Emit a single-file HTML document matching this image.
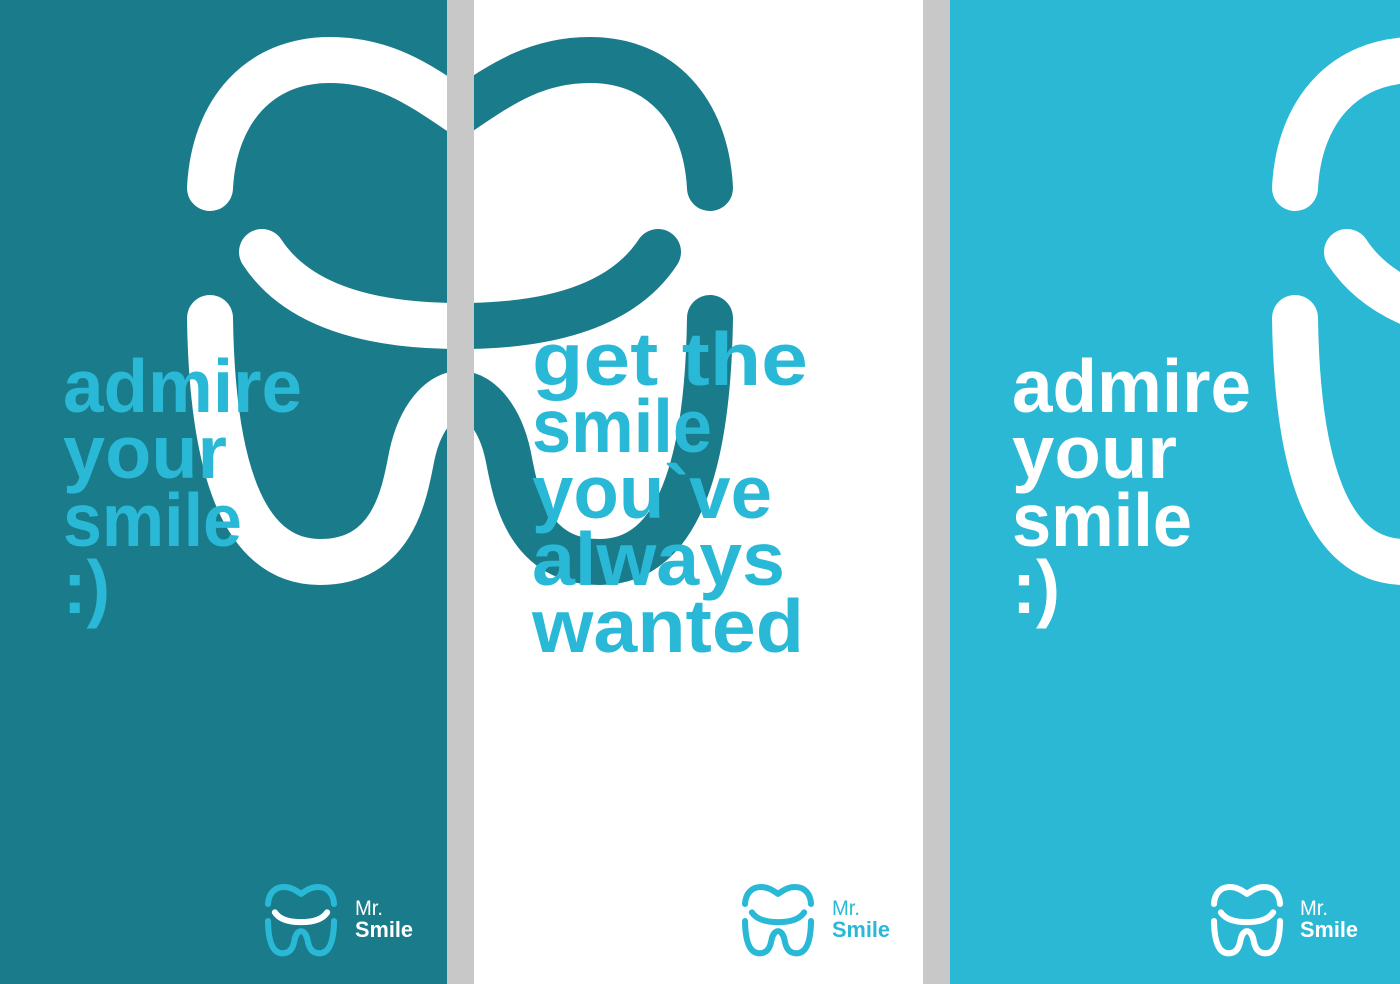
<!DOCTYPE html>
<html><head><meta charset="utf-8"><style>
html,body{margin:0;padding:0;width:1400px;height:984px;overflow:hidden;background:#fff}
svg{display:block}
text{font-family:"Liberation Sans",sans-serif;font-weight:bold}
</style></head><body>
<svg width="1400" height="984" viewBox="0 0 1400 984" xmlns="http://www.w3.org/2000/svg">
<defs>
<g id="tooth" fill="none" stroke-width="46" stroke-linecap="round" stroke-linejoin="round">
<path d="M210,188 C214,110 260,60 330,60 C385,60 420,85 460,112 C500,85 535,60 590,60 C660,60 706,110 710,188"/>
<path d="M262,252 C300,310 380,326 460,326 C540,326 620,310 658,252"/>
<path d="M210,318 C212,460 240,562 320,562 C395,562 405,490 412,455 C420,418 440,394 460,394 C480,394 500,418 508,455 C515,490 525,562 600,562 C680,562 708,460 710,318"/>
</g>
<clipPath id="c1"><rect x="0" y="0" width="447" height="984"/></clipPath>
<clipPath id="c2"><rect x="474" y="0" width="449" height="984"/></clipPath>
<clipPath id="c3"><rect x="950" y="0" width="450" height="984"/></clipPath>
</defs>
<rect x="0" y="0" width="447" height="984" fill="#1a7b8a"/>
<rect x="474" y="0" width="449" height="984" fill="#ffffff"/>
<rect x="950" y="0" width="450" height="984" fill="#2ab8d5"/>
<rect x="447" y="0" width="27" height="984" fill="#c8c8c8"/>
<rect x="923" y="0" width="27" height="984" fill="#c8c8c8"/>
<use href="#tooth" stroke="#ffffff" clip-path="url(#c1)"/>
<use href="#tooth" stroke="#1a7b8a" clip-path="url(#c2)"/>
<g clip-path="url(#c3)"><use href="#tooth" stroke="#ffffff" transform="translate(1085,0)"/></g>

<g font-size="75" fill="#29b9d6">
<text x="63" y="412" textLength="239" lengthAdjust="spacingAndGlyphs">admire</text>
<text x="63" y="478" textLength="164" lengthAdjust="spacingAndGlyphs">your</text>
<text x="63" y="546" textLength="179" lengthAdjust="spacingAndGlyphs">smile</text>
<text x="63" y="613" textLength="47" lengthAdjust="spacingAndGlyphs">:)</text>
<text x="532" y="385" textLength="276" lengthAdjust="spacingAndGlyphs">get the</text>
<text x="532" y="452" textLength="180" lengthAdjust="spacingAndGlyphs">smile</text>
<text x="532" y="518" textLength="240" lengthAdjust="spacingAndGlyphs">you`ve</text>
<text x="532" y="585" textLength="253" lengthAdjust="spacingAndGlyphs">always</text>
<text x="532" y="652" textLength="272" lengthAdjust="spacingAndGlyphs">wanted</text>
</g>
<g font-size="75" fill="#ffffff">
<text x="1012" y="412" textLength="239" lengthAdjust="spacingAndGlyphs">admire</text>
<text x="1012" y="478" textLength="165" lengthAdjust="spacingAndGlyphs">your</text>
<text x="1012" y="546" textLength="180" lengthAdjust="spacingAndGlyphs">smile</text>
<text x="1012" y="613" textLength="48" lengthAdjust="spacingAndGlyphs">:)</text>
</g>

<g transform="translate(240.3,879.1) scale(0.132)">
<use href="#tooth" stroke="#29b9d6"/>
<path d="M262,252 C300,310 380,326 460,326 C540,326 620,310 658,252" fill="none" stroke="#fff" stroke-width="46" stroke-linecap="round"/>
</g>
<text x="355" y="915" font-size="21" style="font-weight:normal" fill="#fff" textLength="28" lengthAdjust="spacingAndGlyphs">Mr.</text>
<text x="355" y="937" font-size="22" fill="#fff" textLength="58" lengthAdjust="spacingAndGlyphs">Smile</text>

<g transform="translate(717.3,879.1) scale(0.132)"><use href="#tooth" stroke="#29b9d6"/></g>
<text x="832" y="915" font-size="21" style="font-weight:normal" fill="#29b9d6" textLength="28" lengthAdjust="spacingAndGlyphs">Mr.</text>
<text x="832" y="937" font-size="22" fill="#29b9d6" textLength="58" lengthAdjust="spacingAndGlyphs">Smile</text>

<g transform="translate(1186.3,879.1) scale(0.132)"><use href="#tooth" stroke="#ffffff"/></g>
<text x="1300" y="915" font-size="21" style="font-weight:normal" fill="#fff" textLength="28" lengthAdjust="spacingAndGlyphs">Mr.</text>
<text x="1300" y="937" font-size="22" fill="#fff" textLength="58" lengthAdjust="spacingAndGlyphs">Smile</text>
</svg>
</body></html>
